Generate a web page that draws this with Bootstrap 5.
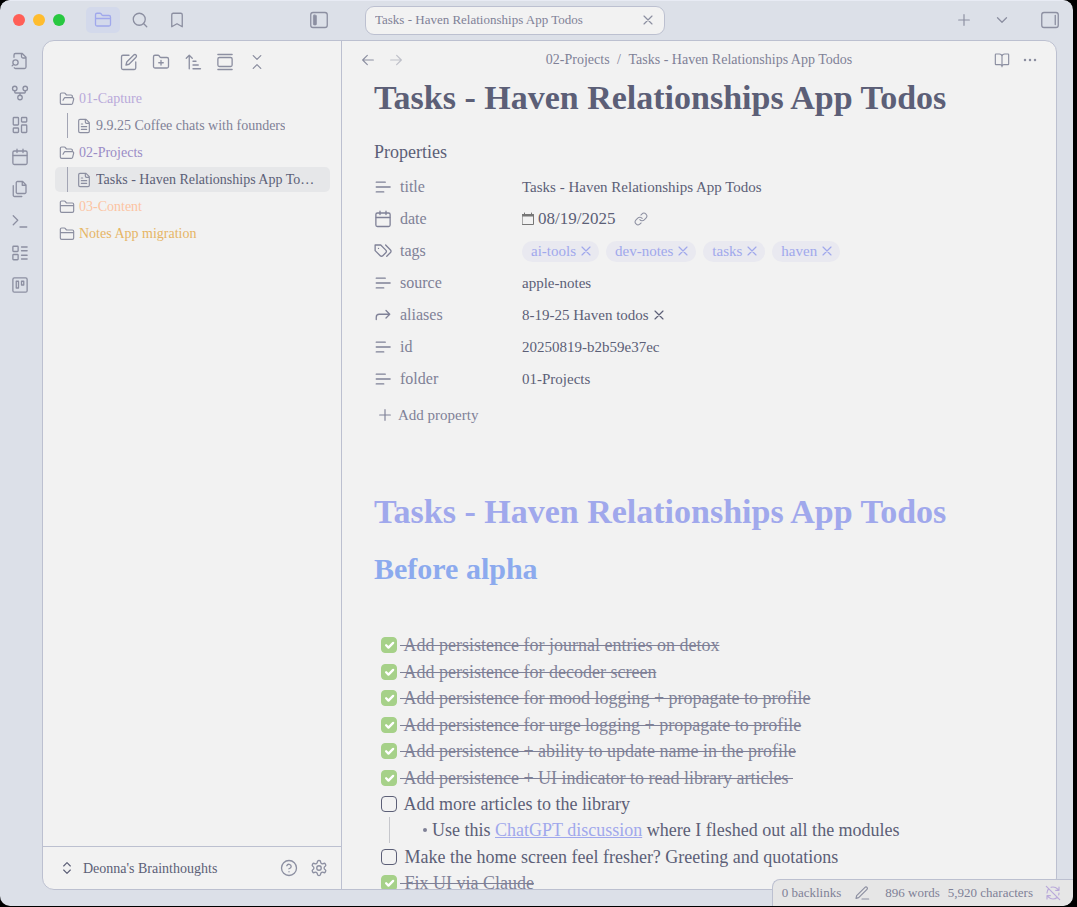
<!DOCTYPE html>
<html lang="en">
<head>
<meta charset="utf-8">
<meta name="viewport" content="width=device-width, initial-scale=1">
<title>Tasks - Haven Relationships App Todos</title>
<link href="https://cdn.jsdelivr.net/npm/bootstrap@5.3.0/dist/css/bootstrap.min.css" rel="stylesheet">
<style>
:root {
  --frame: #dce0e8; --pane: #f2f2f2; --line: #bcc0d0;
  --ink: #5c5f77; --soft: #7f8197; --icon: #8c8fa1; --accent: #a0a8ec;
}
body { background: #000; color: var(--ink); font-family: Georgia, "Liberation Serif", serif; font-size: 15px; }
.app-window { height: 100vh; padding: 0 4px 1px 0; }
.app-frame { background: var(--frame); border-radius: 10px; border-top: 1px solid #e8ebf4; }
.ico { width: 18px; height: 18px; flex: none; display: block; fill: none; stroke: currentColor; stroke-width: 1.75; stroke-linecap: round; stroke-linejoin: round; }
.ico-md { width: 16px; height: 16px; }
.ico-sm { width: 14px; height: 14px; }
.ibtn { background: none; border: 0; padding: 0; color: var(--icon); display: flex; align-items: center; justify-content: center; }
.titlebar { height: 39px; flex: none; padding-bottom: 1px; }
.light { width: 12px; height: 12px; border-radius: 50%; }
.side-tabs { gap: 3px; margin-left: 21px; }
.side-tabs .ibtn { width: 34px; height: 26px; border-radius: 5px; }
.side-tabs .ibtn.active { background: #d3d9eb; color: var(--accent); }
.left-head { width: 342px; flex: none; padding: 0 14px 0 13px; }
.doc-tab { width: 300px; height: 29px; margin-left: 23px; padding: 0 8px 0 9px; background: var(--pane); border: 1px solid var(--line); border-radius: 9px; font-size: 13px; color: var(--soft); }
.right-head { padding-right: 14px; }
.right-head .tab-list { margin: 0 30px 0 21px; }
.ribbon { width: 42px; flex: none; padding: 5px 0 0; }
.ribbon .ibtn { width: 40px; height: 32px; }
.workspace { background: var(--pane); border: 1px solid var(--line); border-radius: 12px; margin: 0 16px 16px 0; }
.explorer { width: 299px; flex: none; border-right: 1px solid var(--line); }
.tree-tools { gap: 14px; padding: 12px 0 15px 2px; }
.tree { padding: 0 11px 0 12px; font-size: 14px; }
.tree-row { height: 25px; margin-bottom: 2px; padding: 0 12px 0 4px; border-radius: 5px; color: inherit; text-decoration: none; gap: 4px; }
.tree-row .ico { color: var(--icon); }
.tree-leaf { padding-left: 12px; }
.tree-leaf::before { content: ""; width: 1px; align-self: stretch; background: #a3a5b4; margin-right: 4px; }
.tree-leaf.active { background: #e6e7e9; color: var(--ink); }
.vault { height: 43px; border-top: 1px solid var(--line); padding: 0 13px 0 16px; font-size: 14px; }
.view-head { height: 37px; flex: none; padding: 0 18px; color: var(--soft); font-size: 14px; }
.view-head a { color: inherit; text-decoration: none; }
.note { padding: 0 32px; scrollbar-width: none; }
.doc-title { font-size: 34px; line-height: 40px; font-weight: 700; margin: 0; }
.doc-title.tinted { color: var(--accent); margin-top: 61px; }
.doc-sub { font-size: 30px; line-height: 36px; font-weight: 700; color: #8caaee; margin: 19px 0 45px; }
.props-title { font-size: 18px; line-height: 24px; font-weight: 400; margin: 22px 0 7px; }
.prop { height: 32px; }
.prop dt { width: 148px; flex: none; gap: 8px; font-weight: 400; font-size: 16px; color: var(--soft); }
.date-field { width: 80px; border: 0; background: none; color: var(--ink); font-size: 17px; padding: 0; outline: 0; }
.date-field::-webkit-calendar-picker-indicator { display: none; }
.date-ico { width: 12px; color: #777; margin-right: 4px; }
.pills { gap: 7px; }
.pill { height: 21px; border-radius: 11px; background: #e9e9f0; color: var(--accent); font-size: 15px; padding: 0 5px 0 9px; gap: 2px; }
.pill .ibtn { color: inherit; }
.alias { gap: 2px; }
.add-prop { background: none; border: 0; padding: 0 3px; height: 32px; margin-top: 4px; color: var(--soft); gap: 5px; }
.todo { font-size: 18px; line-height: 26px; padding-left: 7px; }
.todo > li:nth-child(even) { margin-top: 1px; }
.todo label { white-space: pre; }
.todo-row { height: 26px; gap: 3px; }
.todo-row.done label { color: var(--soft); text-decoration: line-through; }
.todo .form-check-input { width: 16px; height: 16px; margin: 0; border: 1px solid var(--ink); border-radius: 4px; background-color: transparent; flex: none; }
.todo .form-check-input:checked { border-color: #a6d189; background-color: #a6d189; background-size: 15px 15px; }
.todo-nest { margin-left: 8px; border-left: 1px solid #c6c7cc; padding-left: 33px; gap: 5px; }
.todo-nest::before { content: ""; width: 4px; height: 4px; border-radius: 50%; background: var(--soft); }
.todo-nest a { color: var(--accent); }
.statusbar { right: 0; bottom: 0; height: 27px; background: #e6e6e6; border: 1px solid var(--line); border-width: 1px 0 0 1px; border-radius: 8px 0 10px 0; padding: 0 12px 0 9px; font-size: 13px; color: var(--soft); }
.statusbar .edit-mode { margin: 0 15px 0 13px; }
</style>
</head>
<body>
<svg class="d-none" xmlns="http://www.w3.org/2000/svg">
  <symbol id="folder" viewBox="0 0 24 24"><path d="M20 20a2 2 0 0 0 2-2V8a2 2 0 0 0-2-2h-7.9a2 2 0 0 1-1.69-.9L9.6 3.9A2 2 0 0 0 7.93 3H4a2 2 0 0 0-2 2v13a2 2 0 0 0 2 2ZM2 10h20"/></symbol>
  <symbol id="folder-open" viewBox="0 0 24 24"><path d="m6 14 1.5-2.9A2 2 0 0 1 9.24 10H20a2 2 0 0 1 1.94 2.5l-1.54 6a2 2 0 0 1-1.95 1.5H4a2 2 0 0 1-2-2V5a2 2 0 0 1 2-2h3.9a2 2 0 0 1 1.69.9l.81 1.2a2 2 0 0 0 1.67.9H18a2 2 0 0 1 2 2v2"/></symbol>
  <symbol id="folder-plus" viewBox="0 0 24 24"><path d="M12 10v6M9 13h6M20 20a2 2 0 0 0 2-2V8a2 2 0 0 0-2-2h-7.9a2 2 0 0 1-1.69-.9L9.6 3.9A2 2 0 0 0 7.93 3H4a2 2 0 0 0-2 2v13a2 2 0 0 0 2 2Z"/></symbol>
  <symbol id="search" viewBox="0 0 24 24"><circle cx="11" cy="11" r="8"/><path d="m21 21-4.3-4.3"/></symbol>
  <symbol id="bookmark" viewBox="0 0 24 24"><path d="m19 21-7-4-7 4V5a2 2 0 0 1 2-2h10a2 2 0 0 1 2 2v16z"/></symbol>
  <symbol id="panel-left" viewBox="0 0 24 24"><rect x="1" y="2" width="22" height="20" rx="3"/><rect x="4.5" y="5.5" width="4" height="13" rx="1" fill="currentColor" stroke-width="1"/></symbol>
  <symbol id="panel-right" viewBox="0 0 24 24"><rect x="1" y="2" width="22" height="20" rx="3"/><path d="M19 6v12"/></symbol>
  <symbol id="x" viewBox="0 0 24 24"><path d="M18 6 6 18M6 6l12 12"/></symbol>
  <symbol id="plus" viewBox="0 0 24 24"><path d="M4 12h16M12 4v16"/></symbol>
  <symbol id="chevron" viewBox="0 0 24 24"><path d="m6 9 6 6 6-6"/></symbol>
  <symbol id="file-search" viewBox="0 0 24 24"><path d="M14 2v4a2 2 0 0 0 2 2h4M4.3 21A2 2 0 0 0 6 22h12a2 2 0 0 0 2-2V7l-5-5H6a2 2 0 0 0-2 2v3"/><circle cx="6" cy="14" r="3.500"/><path d="m3.500 16.500-2 2"/></symbol>
  <symbol id="fork" viewBox="0 0 24 24"><circle cx="12" cy="18" r="3"/><circle cx="5" cy="6" r="3"/><circle cx="19" cy="6" r="3"/><path d="M19 9v2c0 .6-.4 1-1 1H6c-.6 0-1-.4-1-1V9M12 12v3"/></symbol>
  <symbol id="dashboard" viewBox="0 0 24 24"><rect x="3" y="2" width="7" height="10" rx="1"/><rect x="14" y="2" width="7" height="6" rx="1"/><rect x="14" y="12" width="7" height="10" rx="1"/><rect x="3" y="16" width="7" height="6" rx="1"/></symbol>
  <symbol id="calendar" viewBox="0 0 24 24"><rect x="2.500" y="4" width="19" height="18" rx="2"/><path d="M16 1.500V6M8 1.500V6M3 10h18"/></symbol>
  <symbol id="files" viewBox="0 0 24 24"><path d="M15.5 2H8.6c-.4 0-.8.2-1.1.5-.3.3-.5.7-.5 1.1v12.8c0 .4.2.8.5 1.1.3.3.7.5 1.1.5h9.8c.4 0 .8-.2 1.1-.5.3-.3.5-.7.5-1.1V6.5L15.5 2zM3 7.6v12.800c0 .4.2.8.5 1.1.3.3.7.5 1.1.5h9.800M15 2v5h5"/></symbol>
  <symbol id="terminal" viewBox="0 0 24 24"><path d="m3 17 6-6-6-6M12 20h9"/></symbol>
  <symbol id="layout-list" viewBox="0 0 24 24"><rect x="2.500" y="3" width="7" height="7" rx="1"/><rect x="2.500" y="14" width="7" height="7" rx="1"/><path d="M14 4h7.500M14 9h7.500M14 15h7.500M14 20h7.500"/></symbol>
  <symbol id="board" viewBox="0 0 24 24"><rect x="2.500" y="2.500" width="19" height="19" rx="2"/><path d="M7 7h3v9H7zM14 7h3v5h-3z"/></symbol>
  <symbol id="edit" viewBox="0 0 24 24"><path d="M12 3H4a2 2 0 0 0-2 2v15a2 2 0 0 0 2 2h15a2 2 0 0 0 2-2v-8M18.375 2.625a2.121 2.121 0 1 1 3 3L12 15l-4 1 1-4Z"/></symbol>
  <symbol id="sort" viewBox="0 0 24 24"><path d="m3 7 4-4 4 4M7 3v18M12 11h4M12 16h7M12 21h10"/></symbol>
  <symbol id="gallery" viewBox="0 0 24 24"><path d="M2.500 2h19M2.500 22h19"/><rect x="2.500" y="6" width="19" height="12" rx="2"/></symbol>
  <symbol id="collapse" viewBox="0 0 24 24"><path d="m7 20.500 5-5 5 5M7 3.500l5 5 5-5"/></symbol>
  <symbol id="updown" viewBox="0 0 24 24"><path d="m7 15 5 5 5-5M7 9l5-5 5 5"/></symbol>
  <symbol id="file" viewBox="0 0 24 24"><path d="M15 2H6a2 2 0 0 0-2 2v16a2 2 0 0 0 2 2h12a2 2 0 0 0 2-2V7ZM14 2v4a2 2 0 0 0 2 2h4M10 9H8M16 13H8M16 17H8"/></symbol>
  <symbol id="text" viewBox="0 0 24 24"><path d="M15 5.500H3M21.500 12H3M13 18.500H3"/></symbol>
  <symbol id="tags" viewBox="0 0 24 24"><path d="M9 4H1.500v7.500l6.800 6.800c.94.94 2.480.94 3.420 0l4-4c.94-.94.94-2.480 0-3.420L9 4ZM6 8.500v.01M15.500 4l6.500 6.600a2.400 2.400 0 0 1 0 3.400L17 19"/></symbol>
  <symbol id="forward" viewBox="0 0 24 24"><path d="m16 16 5-5-5-5M3 18v-3a4 4 0 0 1 4-4h14"/></symbol>
  <symbol id="link" viewBox="0 0 24 24"><path d="M10 13a5 5 0 0 0 7.540.54l3-3a5 5 0 0 0-7.070-7.070l-1.720 1.710M14 11a5 5 0 0 0-7.540-.54l-3 3a5 5 0 0 0 7.070 7.070l1.710-1.710"/></symbol>
  <symbol id="back" viewBox="0 0 24 24"><path d="m11 19-7-7 7-7M4 12h16"/></symbol>
  <symbol id="next" viewBox="0 0 24 24"><path d="m13 5 7 7-7 7M20 12H4"/></symbol>
  <symbol id="book" viewBox="0 0 24 24"><path d="M12 6v16M3 19a1 1 0 0 1-1-1V4a1 1 0 0 1 1-1h5a4 4 0 0 1 4 3 4 4 0 0 1 4-3h5a1 1 0 0 1 1 1v14a1 1 0 0 1-1 1h-6a3 3 0 0 0-3 2 3 3 0 0 0-3-2z"/></symbol>
  <symbol id="dots" viewBox="0 0 24 24"><g fill="currentColor" stroke="none"><circle cx="4.500" cy="12" r="1.900"/><circle cx="12" cy="12" r="1.900"/><circle cx="19.500" cy="12" r="1.900"/></g></symbol>
  <symbol id="help" viewBox="0 0 24 24"><circle cx="12" cy="12" r="10"/><path d="M9.090 9a3 3 0 0 1 5.830 1c0 2-3 3-3 3M12 17h.01"/></symbol>
  <symbol id="gear" viewBox="0 0 24 24"><path d="M12.220 2h-.44a2 2 0 0 0-2 2v.18a2 2 0 0 1-1 1.730l-.43.25a2 2 0 0 1-2 0l-.15-.08a2 2 0 0 0-2.730.73l-.22.38a2 2 0 0 0 .73 2.730l.15.1a2 2 0 0 1 1 1.720v.51a2 2 0 0 1-1 1.740l-.15.09a2 2 0 0 0-.73 2.730l.22.38a2 2 0 0 0 2.730.73l.15-.08a2 2 0 0 1 2 0l.43.25a2 2 0 0 1 1 1.730V20a2 2 0 0 0 2 2h.44a2 2 0 0 0 2-2v-.18a2 2 0 0 1 1-1.730l.43-.25a2 2 0 0 1 2 0l.15.08a2 2 0 0 0 2.730-.73l.22-.39a2 2 0 0 0-.73-2.730l-.15-.08a2 2 0 0 1-1-1.740v-.5a2 2 0 0 1 1-1.740l.15-.09a2 2 0 0 0 .73-2.730l-.22-.38a2 2 0 0 0-2.730-.73l-.15.08a2 2 0 0 1-2 0l-.43-.25a2 2 0 0 1-1-1.730V4a2 2 0 0 0-2-2z"/><circle cx="12" cy="12" r="3"/></symbol>
  <symbol id="pen" viewBox="0 0 24 24"><path d="M12 21h10M16.500 3.500a2.121 2.121 0 0 1 3 3L7 19l-4 1 1-4L16.500 3.500z"/></symbol>
  <symbol id="sync-off" viewBox="0 0 24 24"><path d="M21 8l-2.260-2.260A9.750 9.750 0 0 0 12 3c-1 0-1.970.16-2.870.47M8 16H3v5M3 12c0-2.490 1-4.740 2.640-6.360M3 16l2.260 2.260A9.750 9.750 0 0 0 12 21c2.490 0 4.740-1 6.360-2.640M21 12c0 1-.16 1.970-.47 2.870M21 3v5h-5M22 22 2 2"/></symbol>
  <symbol id="cal-field" viewBox="0 0 12 14"><path d="M.5 2.500h11v10H.5z" stroke-width="1" stroke-linejoin="miter"/><path d="M.5 2.500h11v1.500H.5zM2.500 1v1M9.500 1v1" fill="currentColor" stroke-width="1"/></symbol>
</svg>

<div class="app-window">
<div class="app-frame h-100 d-flex flex-column position-relative overflow-hidden">

  <header class="titlebar d-flex align-items-center">
    <div class="left-head d-flex align-items-center">
      <div class="d-flex gap-2">
        <span class="light" style="background:#ff5f57"></span><span class="light" style="background:#febc2e"></span><span class="light" style="background:#28c840"></span>
      </div>
      <div class="side-tabs d-flex">
        <button class="ibtn active" aria-label="Files"><svg class="ico"><use href="#folder"/></svg></button>
        <button class="ibtn" aria-label="Search"><svg class="ico"><use href="#search"/></svg></button>
        <button class="ibtn" aria-label="Bookmarks"><svg class="ico"><use href="#bookmark"/></svg></button>
      </div>
      <button class="ibtn ms-auto" aria-label="Collapse left sidebar"><svg class="ico"><use href="#panel-left"/></svg></button>
    </div>
    <div class="doc-tab d-flex align-items-center justify-content-between">
      <span class="text-truncate">Tasks - Haven Relationships App Todos</span>
      <button class="ibtn" aria-label="Close tab"><svg class="ico ico-md"><use href="#x"/></svg></button>
    </div>
    <div class="right-head d-flex align-items-center ms-auto">
      <button class="ibtn" aria-label="New tab"><svg class="ico ico-md"><use href="#plus"/></svg></button>
      <button class="ibtn tab-list" aria-label="Tab list"><svg class="ico"><use href="#chevron"/></svg></button>
      <button class="ibtn" aria-label="Expand right sidebar"><svg class="ico"><use href="#panel-right"/></svg></button>
    </div>
  </header>

  <div class="d-flex flex-grow-1 overflow-hidden">
    <nav class="ribbon d-flex flex-column" aria-label="Ribbon">
      <button class="ibtn" aria-label="Quick switcher"><svg class="ico"><use href="#file-search"/></svg></button>
      <button class="ibtn" aria-label="Graph view"><svg class="ico"><use href="#fork"/></svg></button>
      <button class="ibtn" aria-label="Canvas"><svg class="ico"><use href="#dashboard"/></svg></button>
      <button class="ibtn" aria-label="Daily note"><svg class="ico"><use href="#calendar"/></svg></button>
      <button class="ibtn" aria-label="Templates"><svg class="ico"><use href="#files"/></svg></button>
      <button class="ibtn" aria-label="Command palette"><svg class="ico"><use href="#terminal"/></svg></button>
      <button class="ibtn" aria-label="Bases"><svg class="ico"><use href="#layout-list"/></svg></button>
      <button class="ibtn" aria-label="Kanban board"><svg class="ico"><use href="#board"/></svg></button>
    </nav>

    <div class="workspace d-flex flex-grow-1 overflow-hidden">
      <aside class="explorer d-flex flex-column">
        <div class="tree-tools d-flex justify-content-center">
          <button class="ibtn" aria-label="New note"><svg class="ico"><use href="#edit"/></svg></button>
          <button class="ibtn" aria-label="New folder"><svg class="ico"><use href="#folder-plus"/></svg></button>
          <button class="ibtn" aria-label="Sort order"><svg class="ico"><use href="#sort"/></svg></button>
          <button class="ibtn" aria-label="Auto-reveal"><svg class="ico"><use href="#gallery"/></svg></button>
          <button class="ibtn" aria-label="Collapse all"><svg class="ico"><use href="#collapse"/></svg></button>
        </div>
        <nav class="tree flex-grow-1" aria-label="Files">
          <a href="#" class="tree-row d-flex align-items-center" style="color:#b9a9da"><svg class="ico ico-md"><use href="#folder-open"/></svg>01-Capture</a>
          <a href="#" class="tree-row tree-leaf d-flex align-items-center" style="color:#7f8197"><svg class="ico ico-md"><use href="#file"/></svg><span class="text-truncate">9.9.25 Coffee chats with founders</span></a>
          <a href="#" class="tree-row d-flex align-items-center" style="color:#9a8cc6"><svg class="ico ico-md"><use href="#folder-open"/></svg>02-Projects</a>
          <a href="#" class="tree-row tree-leaf active d-flex align-items-center"><svg class="ico ico-md"><use href="#file"/></svg><span class="text-truncate">Tasks - Haven Relationships App Todos</span></a>
          <a href="#" class="tree-row d-flex align-items-center" style="color:#fcc4a2"><svg class="ico ico-md"><use href="#folder"/></svg>03-Content</a>
          <a href="#" class="tree-row d-flex align-items-center" style="color:#e6b565"><svg class="ico ico-md"><use href="#folder"/></svg>Notes App migration</a>
        </nav>
        <div class="vault d-flex align-items-center">
          <button class="ibtn gap-2 text-reset"><svg class="ico ico-md"><use href="#updown"/></svg>Deonna's Brainthoughts</button>
          <button class="ibtn ms-auto" aria-label="Help"><svg class="ico"><use href="#help"/></svg></button>
          <button class="ibtn ms-2 ps-1" aria-label="Settings"><svg class="ico"><use href="#gear"/></svg></button>
        </div>
      </aside>

      <main class="flex-grow-1 d-flex flex-column overflow-hidden">
        <div class="view-head d-flex align-items-center">
          <button class="ibtn" aria-label="Back"><svg class="ico ico-md"><use href="#back"/></svg></button>
          <button class="ibtn opacity-50 ms-2 ps-1" aria-label="Forward"><svg class="ico ico-md"><use href="#next"/></svg></button>
          <div class="mx-auto"><a href="#">02-Projects</a><span class="px-1"> / </span><span>Tasks - Haven Relationships App Todos</span></div>
          <button class="ibtn" aria-label="Reading view"><svg class="ico ico-md"><use href="#book"/></svg></button>
          <button class="ibtn ms-2 ps-1" aria-label="More options"><svg class="ico ico-md"><use href="#dots"/></svg></button>
        </div>

        <article class="note flex-grow-1 overflow-auto">
          <h1 class="doc-title">Tasks - Haven Relationships App Todos</h1>
          <h2 class="props-title">Properties</h2>
          <dl class="m-0">
            <div class="prop d-flex align-items-center"><dt class="d-flex align-items-center"><svg class="ico"><use href="#text"/></svg>title</dt><dd class="m-0">Tasks - Haven Relationships App Todos</dd></div>
            <div class="prop d-flex align-items-center"><dt class="d-flex align-items-center"><svg class="ico"><use href="#calendar"/></svg><label for="date">date</label></dt><dd class="m-0 d-flex align-items-center"><svg class="ico ico-sm date-ico"><use href="#cal-field"/></svg><input class="date-field" id="date" type="date" value="2025-08-19"><button class="ibtn ms-3" aria-label="Open daily note"><svg class="ico ico-sm"><use href="#link"/></svg></button></dd></div>
            <div class="prop d-flex align-items-center"><dt class="d-flex align-items-center"><svg class="ico"><use href="#tags"/></svg>tags</dt><dd class="pills m-0 d-flex">
              <span class="pill d-flex align-items-center">ai-tools<button class="ibtn" aria-label="Remove ai-tools"><svg class="ico ico-md"><use href="#x"/></svg></button></span>
              <span class="pill d-flex align-items-center">dev-notes<button class="ibtn" aria-label="Remove dev-notes"><svg class="ico ico-md"><use href="#x"/></svg></button></span>
              <span class="pill d-flex align-items-center">tasks<button class="ibtn" aria-label="Remove tasks"><svg class="ico ico-md"><use href="#x"/></svg></button></span>
              <span class="pill d-flex align-items-center">haven<button class="ibtn" aria-label="Remove haven"><svg class="ico ico-md"><use href="#x"/></svg></button></span></dd></div>
            <div class="prop d-flex align-items-center"><dt class="d-flex align-items-center"><svg class="ico"><use href="#text"/></svg>source</dt><dd class="m-0">apple-notes</dd></div>
            <div class="prop d-flex align-items-center"><dt class="d-flex align-items-center"><svg class="ico"><use href="#forward"/></svg>aliases</dt><dd class="alias m-0 d-flex align-items-center">8-19-25 Haven todos<button class="ibtn text-reset" aria-label="Remove alias"><svg class="ico ico-md"><use href="#x"/></svg></button></dd></div>
            <div class="prop d-flex align-items-center"><dt class="d-flex align-items-center"><svg class="ico"><use href="#text"/></svg>id</dt><dd class="m-0">20250819-b2b59e37ec</dd></div>
            <div class="prop d-flex align-items-center"><dt class="d-flex align-items-center"><svg class="ico"><use href="#text"/></svg>folder</dt><dd class="m-0">01-Projects</dd></div>
          </dl>
          <button class="add-prop d-flex align-items-center"><svg class="ico ico-md"><use href="#plus"/></svg>Add property</button>

          <h1 class="doc-title tinted">Tasks - Haven Relationships App Todos</h1>
          <h2 class="doc-sub">Before alpha</h2>
          <ul class="todo list-unstyled m-0">
            <li class="todo-row done d-flex align-items-center"><input class="form-check-input" type="checkbox" id="t1" checked><label for="t1"> Add persistence for journal entries on detox</label></li>
            <li class="todo-row done d-flex align-items-center"><input class="form-check-input" type="checkbox" id="t2" checked><label for="t2"> Add persistence for decoder screen</label></li>
            <li class="todo-row done d-flex align-items-center"><input class="form-check-input" type="checkbox" id="t3" checked><label for="t3"> Add persistence for mood logging + propagate to profile</label></li>
            <li class="todo-row done d-flex align-items-center"><input class="form-check-input" type="checkbox" id="t4" checked><label for="t4"> Add persistence for urge logging + propagate to profile</label></li>
            <li class="todo-row done d-flex align-items-center"><input class="form-check-input" type="checkbox" id="t5" checked><label for="t5"> Add persistence + ability to update name in the profile</label></li>
            <li class="todo-row done d-flex align-items-center"><input class="form-check-input" type="checkbox" id="t6" checked><label for="t6"> Add persistence + UI indicator to read library articles </label></li>
            <li>
              <div class="todo-row d-flex align-items-center"><input class="form-check-input" type="checkbox" id="t7"><label for="t7"> Add more articles to the library</label></div>
              <div class="todo-nest d-flex align-items-center"><span>Use this <a href="#">ChatGPT discussion</a> where I fleshed out all the modules</span></div>
            </li>
            <li class="todo-row d-flex align-items-center"><input class="form-check-input" type="checkbox" id="t8"><label for="t8"> Make the home screen feel fresher? Greeting and quotations</label></li>
            <li class="todo-row done d-flex align-items-center"><input class="form-check-input" type="checkbox" id="t9" checked><label for="t9"> Fix UI via Claude</label></li>
          </ul>
        </article>
      </main>
    </div>
  </div>

  <footer class="statusbar position-absolute d-flex align-items-center">
    <span>0 backlinks</span>
    <button class="ibtn edit-mode" aria-label="Editing mode"><svg class="ico ico-md"><use href="#pen"/></svg></button>
    <span class="me-2">896 words</span>
    <span>5,920 characters</span>
    <button class="ibtn ms-2 ps-1" aria-label="Sync off" style="color:#b9a9da"><svg class="ico ico-md"><use href="#sync-off"/></svg></button>
  </footer>
</div>
</div>
<script src="https://cdn.jsdelivr.net/npm/bootstrap@5.3.0/dist/js/bootstrap.bundle.min.js"></script>
</body>
</html>
